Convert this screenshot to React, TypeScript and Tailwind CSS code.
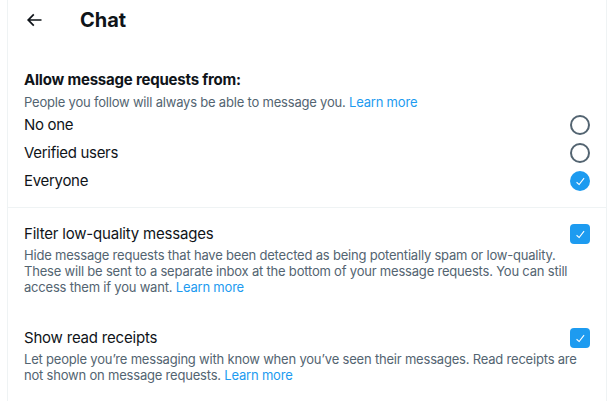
const font = { fontFamily: 'Inter, "Noto Sans", sans-serif' }

function BackArrow() {
  return (
    <svg viewBox="0 0 24 24" className="w-5 h-5 fill-[#0f1419]">
      <path d="M7.414 13l5.043 5.04-1.414 1.42L3.586 12l7.457-7.46 1.414 1.42L7.414 11H21v2H7.414z" />
    </svg>
  )
}

function Radio({checked}: {checked?: boolean}) {
  if (checked) {
    return (
      <span className="flex items-center justify-center w-5 h-5 rounded-full bg-[#1d9bf0]">
        <svg viewBox="0 0 24 24" className="w-[13px] h-[13px] fill-white">
          <path d="M9.64 18.952l-5.55-4.861 1.317-1.504 3.951 3.459 8.459-10.948L19.4 6.32 9.64 18.952z" />
        </svg>
      </span>
    )
  }
  return <span className="block w-5 h-5 rounded-full border-2 border-[#536471]" />
}

function Checkbox() {
  return (
    <span className="flex items-center justify-center w-5 h-5 rounded-[4px] bg-[#1d9bf0]">
      <svg viewBox="0 0 24 24" className="w-[13px] h-[13px] fill-white">
        <path d="M9.64 18.952l-5.55-4.861 1.317-1.504 3.951 3.459 8.459-10.948L19.4 6.32 9.64 18.952z" />
      </svg>
    </span>
  )
}

const options = [
  {label: 'No one', checked: false},
  {label: 'Verified users', checked: false},
  {label: 'Everyone', checked: true},
]

export default function App() {
  return (
    <div className="w-[613px] h-[401px] bg-white overflow-hidden text-[#0f1419]" style={font}>
      <div className="ml-[7px] w-[600px] h-full border-x border-[#eff3f4]">
        {/* Header */}
        <div className="flex items-center h-10 pl-4">
          <div className="w-14">
            <BackArrow />
          </div>
          <h2 className="text-[20px] font-bold leading-6">Chat</h2>
        </div>

        {/* Message requests */}
        <div className="px-4 pt-[30px] pb-3 border-b border-[#eff3f4]">
          <h3 className="text-[15px] font-bold leading-5 tracking-[-0.2px]">Allow message requests from:</h3>
          <p className="mt-1 text-[13px] leading-4 tracking-[-0.2px] text-[#536471]">
            People you follow will always be able to message you. <span className="text-[#1d9bf0]">Learn more</span>
          </p>
          <div className="mt-px">
            {options.map((option) => (
              <div key={option.label} className="flex items-center justify-between h-7">
                <span className="text-[15px] leading-5 tracking-[-0.3px]">{option.label}</span>
                <Radio checked={option.checked} />
              </div>
            ))}
          </div>
        </div>

        {/* Filter */}
        <div className="px-4 pt-4">
          <div className="flex items-center justify-between h-5">
            <span className="text-[15px] leading-5 tracking-[-0.2px]">Filter low-quality messages</span>
            <Checkbox />
          </div>
          <p className="mt-[3px] text-[13px] leading-4 tracking-[-0.2px] text-[#536471]">
            Hide message requests that have been detected as being potentially spam or low-quality. These will be sent to a separate inbox at the bottom of your message requests. You can still access them if you want. <span className="text-[#1d9bf0]">Learn more</span>
          </p>
        </div>

        {/* Read receipts */}
        <div className="px-4 pt-[33px]">
          <div className="flex items-center justify-between h-5">
            <span className="text-[15px] leading-5 tracking-[-0.2px]">Show read receipts</span>
            <Checkbox />
          </div>
          <p className="mt-[3px] text-[13px] leading-4 tracking-[-0.2px] text-[#536471]">
            Let people you’re messaging with know when you’ve seen their messages. Read receipts are not shown on message requests. <span className="text-[#1d9bf0]">Learn more</span>
          </p>
        </div>
      </div>
    </div>
  )
}
